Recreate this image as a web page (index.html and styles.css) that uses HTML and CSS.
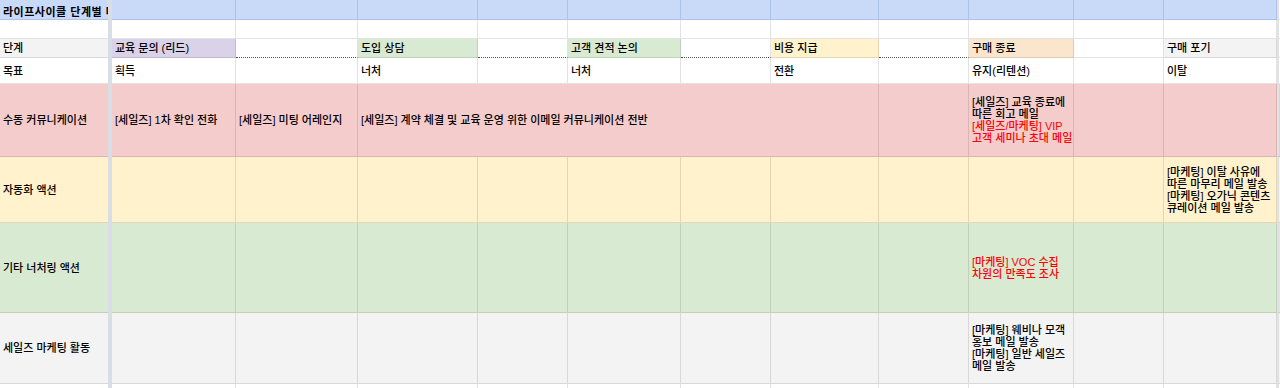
FILE: index.html
```html
<!DOCTYPE html>
<html lang="ko">
<head>
<meta charset="utf-8">
<title>라이프사이클 단계별 마케팅 액션</title>
<link rel="stylesheet" href="styles.css">
</head>
<body>
<div class="sheet">
  <div class="freeze"></div>

  <!-- row 1 -->
  <div class="c a blue title">라이프사이클 단계별 마케팅</div>
  <div class="c blue"></div><div class="c blue"></div><div class="c blue"></div><div class="c blue"></div>
  <div class="c blue"></div><div class="c blue"></div><div class="c blue"></div><div class="c blue"></div>
  <div class="c blue"></div><div class="c blue"></div><div class="c blue"></div>
  <div class="c m"></div>

  <!-- row 2 -->
  <div class="c a"></div>
  <div class="c"></div><div class="c"></div><div class="c"></div><div class="c"></div>
  <div class="c"></div><div class="c"></div><div class="c"></div><div class="c"></div>
  <div class="c"></div><div class="c"></div><div class="c"></div>
  <div class="c m"></div>

  <!-- row 3 -->
  <div class="c a gry">단계</div>
  <div class="c pur">교육 문의 (리드)</div>
  <div class="c dot"></div>
  <div class="c grn">도입 상담</div>
  <div class="c dot"></div>
  <div class="c grn">고객 견적 논의</div>
  <div class="c dot"></div>
  <div class="c yel">비용 지급</div>
  <div class="c dot"></div>
  <div class="c org">구매 종료</div>
  <div class="c"></div>
  <div class="c gry">구매 포기</div>
  <div class="c m"></div>

  <!-- row 4 -->
  <div class="c a">목표</div>
  <div class="c">획득</div>
  <div class="c"></div>
  <div class="c">너처</div>
  <div class="c"></div>
  <div class="c">너처</div>
  <div class="c"></div>
  <div class="c">전환</div>
  <div class="c"></div>
  <div class="c">유지(리텐션)</div>
  <div class="c"></div>
  <div class="c">이탈</div>
  <div class="c m"></div>

  <!-- row 5 -->
  <div class="c a pink">수동 커뮤니케이션</div>
  <div class="c pink">[세일즈] 1차 확인 전화</div>
  <div class="c pink">[세일즈] 미팅 어레인지</div>
  <div class="c pink span5">[세일즈] 계약 체결 및 교육 운영 위한 이메일 커뮤니케이션 전반</div>
  <div class="c pink"></div>
  <div class="c pink"><div class="lines">[세일즈] 교육 종료에<br>따른 회고 메일<br><span class="red">[세일즈/마케팅] VIP<br>고객 세미나 초대 메일</span></div></div>
  <div class="c pink"></div>
  <div class="c pink"></div>
  <div class="c m pink"></div>

  <!-- row 6 -->
  <div class="c a yel">자동화 액션</div>
  <div class="c yel"></div><div class="c yel"></div><div class="c yel"></div><div class="c yel"></div>
  <div class="c yel"></div><div class="c yel"></div><div class="c yel"></div><div class="c yel"></div>
  <div class="c yel"></div><div class="c yel"></div>
  <div class="c yel"><div class="lines">[마케팅] 이탈 사유에<br>따른 마무리 메일 발송<br>[마케팅] 오가닉 콘텐츠<br>큐레이션 메일 발송</div></div>
  <div class="c m yel"></div>

  <!-- row 7 -->
  <div class="c a grn">기타 너처링 액션</div>
  <div class="c grn"></div><div class="c grn"></div><div class="c grn"></div><div class="c grn"></div>
  <div class="c grn"></div><div class="c grn"></div><div class="c grn"></div><div class="c grn"></div>
  <div class="c grn"><div class="lines red">[마케팅] VOC 수집<br>차원의 만족도 조사</div></div>
  <div class="c grn"></div>
  <div class="c grn"></div>
  <div class="c m grn"></div>

  <!-- row 8 -->
  <div class="c a gry">세일즈 마케팅 활동</div>
  <div class="c gry"></div><div class="c gry"></div><div class="c gry"></div><div class="c gry"></div>
  <div class="c gry"></div><div class="c gry"></div><div class="c gry"></div><div class="c gry"></div>
  <div class="c gry"><div class="lines">[마케팅] 웨비나 모객<br>홍보 메일 발송<br>[마케팅] 일반 세일즈<br>메일 발송</div></div>
  <div class="c gry"></div>
  <div class="c gry"></div>
  <div class="c m gry"></div>

  <!-- row 9 -->
  <div class="c a"></div>
  <div class="c"></div><div class="c"></div><div class="c"></div><div class="c"></div>
  <div class="c"></div><div class="c"></div><div class="c"></div><div class="c"></div>
  <div class="c"></div><div class="c"></div><div class="c"></div>
  <div class="c m"></div>
</div>
</body>
</html>
```

FILE: styles.css
```css
html, body {
  margin: 0;
  padding: 0;
  background: #ffffff;
}

body {
  font-family: "Liberation Sans", "Noto Sans CJK KR", sans-serif;
  font-size: 11px;
  font-weight: 500;
  color: #000000;
}

.sheet {
  display: grid;
  grid-template-columns: 108px 4px 124px 122px 120px 90px 113px 90px 108px 90px 105px 90px 113px 3px;
  grid-template-rows: 20px 19px 19px 26px 73px 66px 90px 71px 21px;
  width: 1280px;
  height: 388px;
  overflow: hidden;
}

.freeze {
  grid-column: 2;
  grid-row: 1 / -1;
  background: #d9dde4;
}

.c {
  box-sizing: border-box;
  display: flex;
  align-items: center;
  padding: 0 3px;
  border-right: 1px solid rgba(0, 0, 0, 0.11);
  border-bottom: 1px solid rgba(0, 0, 0, 0.11);
  white-space: nowrap;
  overflow: hidden;
  line-height: 12px;
  min-width: 0;
}

.c.a {
  border-right: none;
}

.c.m {
  padding: 0;
  border-right: none;
  border-left: 2px solid #e2e2e2;
}

.title {
  align-items: flex-end;
  padding-bottom: 1px;
  font-weight: bold;
  letter-spacing: 0.5px;
}

.span5 {
  grid-column: span 5;
}

.lines {
  white-space: nowrap;
}

.red {
  color: #ff0000;
}

.dot {
  border-bottom: 1px dotted #555555;
}

.blue {
  background: #c9daf8;
  border-color: #adc2e8;
}

.pur { background: #d9d2e9; }
.grn { background: #d9ead3; }
.yel { background: #fff2cc; }
.org { background: #fce5cd; }
.gry { background: #f3f3f3; }
.pink { background: #f4cccc; }
```
